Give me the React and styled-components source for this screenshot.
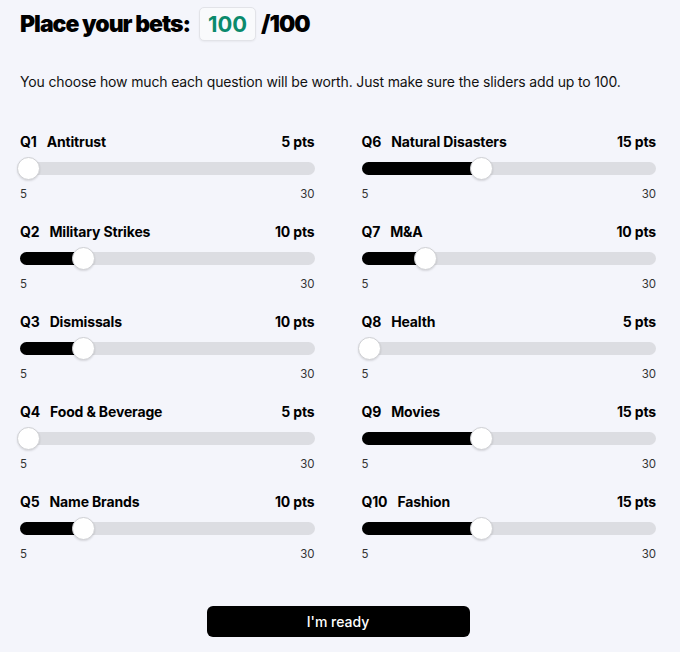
import React, { useState } from 'react';
import styled, { createGlobalStyle } from 'styled-components';

const MIN = 5;
const MAX = 30;

const initialBets = [
  { id: 'Q1', name: 'Antitrust', value: 5 },
  { id: 'Q6', name: 'Natural Disasters', value: 15 },
  { id: 'Q2', name: 'Military Strikes', value: 10 },
  { id: 'Q7', name: 'M&A', value: 10 },
  { id: 'Q3', name: 'Dismissals', value: 10 },
  { id: 'Q8', name: 'Health', value: 5 },
  { id: 'Q4', name: 'Food & Beverage', value: 5 },
  { id: 'Q9', name: 'Movies', value: 15 },
  { id: 'Q5', name: 'Name Brands', value: 10 },
  { id: 'Q10', name: 'Fashion', value: 15 },
];

// thumb centre, measured from the left end of the track
const thumbAt = (f) => `calc(8px + ${f} * (100% - 15px))`;

function Slider({ value, onChange }) {
  const f = (value - MIN) / (MAX - MIN);
  return (
    <SliderWrap>
      <Track>
        <Fill style={{ width: thumbAt(f) }} />
      </Track>
      <Thumb style={{ left: thumbAt(f) }} />
      <HiddenRange
        type="range"
        min={MIN}
        max={MAX}
        step={5}
        value={value}
        onChange={(e) => onChange(Number(e.target.value))}
      />
    </SliderWrap>
  );
}

export default function App() {
  const [bets, setBets] = useState(initialBets);
  const total = bets.reduce((sum, b) => sum + b.value, 0);

  const update = (id, value) =>
    setBets((prev) => prev.map((b) => (b.id === id ? { ...b, value } : b)));

  return (
    <Page>
      <GlobalStyle />
      <Header>
        <Title>Place your bets:</Title>
        <TotalBox>{total}</TotalBox>
        <Title>/100</Title>
      </Header>
      <Intro>
        You choose how much each question will be worth. Just make sure the
        sliders add up to 100.
      </Intro>
      <Grid>
        {bets.map((bet) => (
          <Bet key={bet.id}>
            <BetHead>
              <QNum>{bet.id}</QNum>
              <QName>{bet.name}</QName>
              <Points>{bet.value} pts</Points>
            </BetHead>
            <Slider value={bet.value} onChange={(v) => update(bet.id, v)} />
            <Scale>
              <span>{MIN}</span>
              <span>{MAX}</span>
            </Scale>
          </Bet>
        ))}
      </Grid>
      <Footer>
        <ReadyButton>I'm ready</ReadyButton>
      </Footer>
    </Page>
  );
}

const GlobalStyle = createGlobalStyle`
  body {
    margin: 0;
    background: #f4f5fb;
    font-family: Inter, 'Liberation Sans', sans-serif;
    color: #000;
  }
`;

const Page = styled.main`
  padding: 7px 24px 0 20px;
`;

const Header = styled.div`
  display: flex;
  align-items: center;
  height: 34px;
`;

const Title = styled.h1`
  margin: 0;
  font-size: 23px;
  font-weight: 900;
  letter-spacing: -1px;
`;

const TotalBox = styled.div`
  margin: 0 5px 0 9px;
  width: 57px;
  height: 34px;
  box-sizing: border-box;
  display: flex;
  align-items: center;
  justify-content: center;
  background: #f9fafc;
  border: 1px solid #e2e3e8;
  border-radius: 5px;
  box-shadow: 0 1px 2px rgba(0, 0, 0, 0.05);
  color: #0b8a6c;
  font-size: 22px;
  font-weight: 700;
  letter-spacing: 0;
`;

const Intro = styled.p`
  margin: 31px 0 0;
  font-size: 14px;
  line-height: 20px;
  letter-spacing: -0.15px;
  color: #111;
`;

const Grid = styled.div`
  margin-top: 39px;
  display: grid;
  grid-template-columns: 1fr 1fr;
  column-gap: 47px;
  row-gap: 20px;
`;

const Bet = styled.div`
  display: flex;
  flex-direction: column;
`;

const BetHead = styled.div`
  display: flex;
  align-items: center;
  height: 20px;
  font-size: 14px;
  font-weight: 700;
  letter-spacing: -0.15px;
`;

const QNum = styled.span`
  margin-right: 10px;
`;

const QName = styled.span`
  flex: 1;
`;

const Points = styled.span``;

const SliderWrap = styled.div`
  position: relative;
  margin-top: 6px;
  height: 23px;
  display: flex;
  align-items: center;
`;

const Track = styled.div`
  flex: 1;
  height: 13px;
  border-radius: 7px;
  background: #dcdde2;
  overflow: hidden;
`;

const Fill = styled.div`
  height: 100%;
  background: #000;
`;

const Thumb = styled.div`
  position: absolute;
  top: 0;
  width: 23px;
  height: 23px;
  margin-left: -11.5px;
  box-sizing: border-box;
  border-radius: 50%;
  background: #fff;
  border: 1px solid #cfd0d4;
  box-shadow: 0 1px 2px rgba(0, 0, 0, 0.12);
  pointer-events: none;
`;

const HiddenRange = styled.input`
  position: absolute;
  inset: 0;
  margin: 0;
  width: 100%;
  opacity: 0;
  cursor: pointer;
`;

const Scale = styled.div`
  margin-top: 7px;
  display: flex;
  justify-content: space-between;
  height: 14px;
  line-height: 14px;
  font-size: 11.5px;
  color: #333;
`;

const Footer = styled.div`
  margin-top: 45px;
  display: flex;
  justify-content: center;
`;

const ReadyButton = styled.button`
  width: 263px;
  height: 31px;
  border: none;
  border-radius: 6px;
  background: #000;
  color: #fff;
  font-family: inherit;
  font-size: 14px;
  font-weight: 500;
  cursor: pointer;
`;
